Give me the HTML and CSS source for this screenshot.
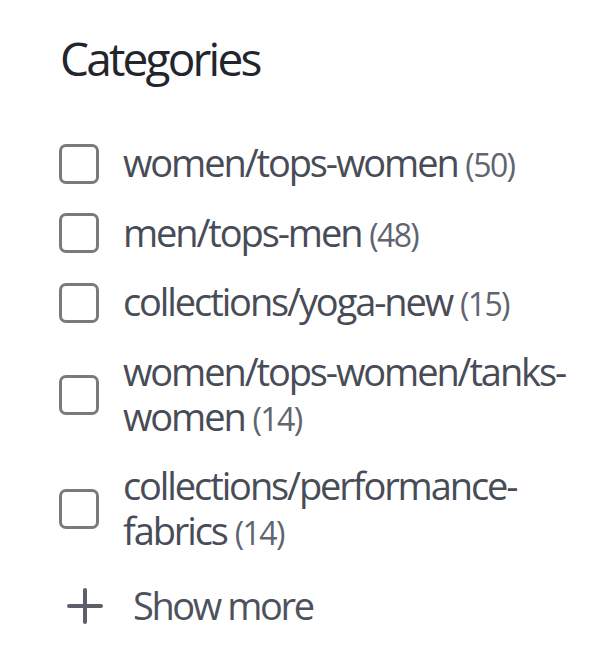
FILE: index.html
```html
<!DOCTYPE html>
<html lang="en">
<head>
<meta charset="utf-8">
<title>Categories</title>
<link rel="stylesheet" href="styles.css">
</head>
<body>
<section class="facet">
  <h2 class="facet-title">Categories</h2>
  <ul class="facet-list">
    <li class="facet-item">
      <span class="checkbox"></span>
      <span class="label">women/tops-women <span class="count">(50)</span></span>
    </li>
    <li class="facet-item">
      <span class="checkbox"></span>
      <span class="label">men/tops-men <span class="count">(48)</span></span>
    </li>
    <li class="facet-item">
      <span class="checkbox"></span>
      <span class="label">collections/yoga-new <span class="count">(15)</span></span>
    </li>
    <li class="facet-item">
      <span class="checkbox"></span>
      <span class="label">women/tops-women/tanks-women <span class="count">(14)</span></span>
    </li>
    <li class="facet-item">
      <span class="checkbox"></span>
      <span class="label">collections/performance-fabrics <span class="count">(14)</span></span>
    </li>
  </ul>
  <button class="show-more" type="button">
    <svg class="plus" width="36" height="36" viewBox="0 0 36 36" aria-hidden="true">
      <path d="M18 2V34M2 18H34" stroke="currentColor" stroke-width="4" stroke-linecap="round" fill="none"/>
    </svg>
    <span>Show more</span>
  </button>
</section>
</body>
</html>
```

FILE: styles.css
```css
html, body {
  margin: 0;
  padding: 0;
  background: #ffffff;
}

body {
  font-family: "Open Sans", "Noto Sans", sans-serif;
  -webkit-font-smoothing: antialiased;
}

.facet {
  padding: 30px 10px 0 59px;
  display: flex;
  flex-direction: column;
  align-items: flex-start;
}

.facet-title {
  margin: 0 0 54px 1px;
  font-size: 46px;
  line-height: 56px;
  font-weight: 400;
  letter-spacing: -2.8px;
  color: #22252b;
}

.facet-list {
  list-style: none;
  margin: 0;
  padding: 0;
  display: flex;
  flex-direction: column;
  gap: 22.5px;
  width: 100%;
}

.facet-item {
  display: flex;
  align-items: center;
  gap: 24px;
}

.checkbox {
  flex: 0 0 auto;
  width: 40px;
  height: 40px;
  box-sizing: border-box;
  border: 3px solid #7a7a7a;
  border-radius: 7px;
  background: #fff;
}

.label {
  flex: 1 1 auto;
  min-width: 0;
  font-size: 38px;
  line-height: 45px;
  letter-spacing: -2.1px;
  color: #474c57;
}

.count {
  font-size: 32px;
  line-height: 45px;
  letter-spacing: -1.6px;
  color: #60656f;
}

.show-more {
  margin: 28px 0 0 8px;
  padding: 0;
  border: 0;
  background: none;
  display: flex;
  align-items: center;
  gap: 30px;
  font-family: inherit;
  font-size: 38px;
  line-height: 45px;
  letter-spacing: -2.4px;
  color: #4d525d;
  cursor: pointer;
}

.plus {
  display: block;
  color: #5a5f69;
}
```
